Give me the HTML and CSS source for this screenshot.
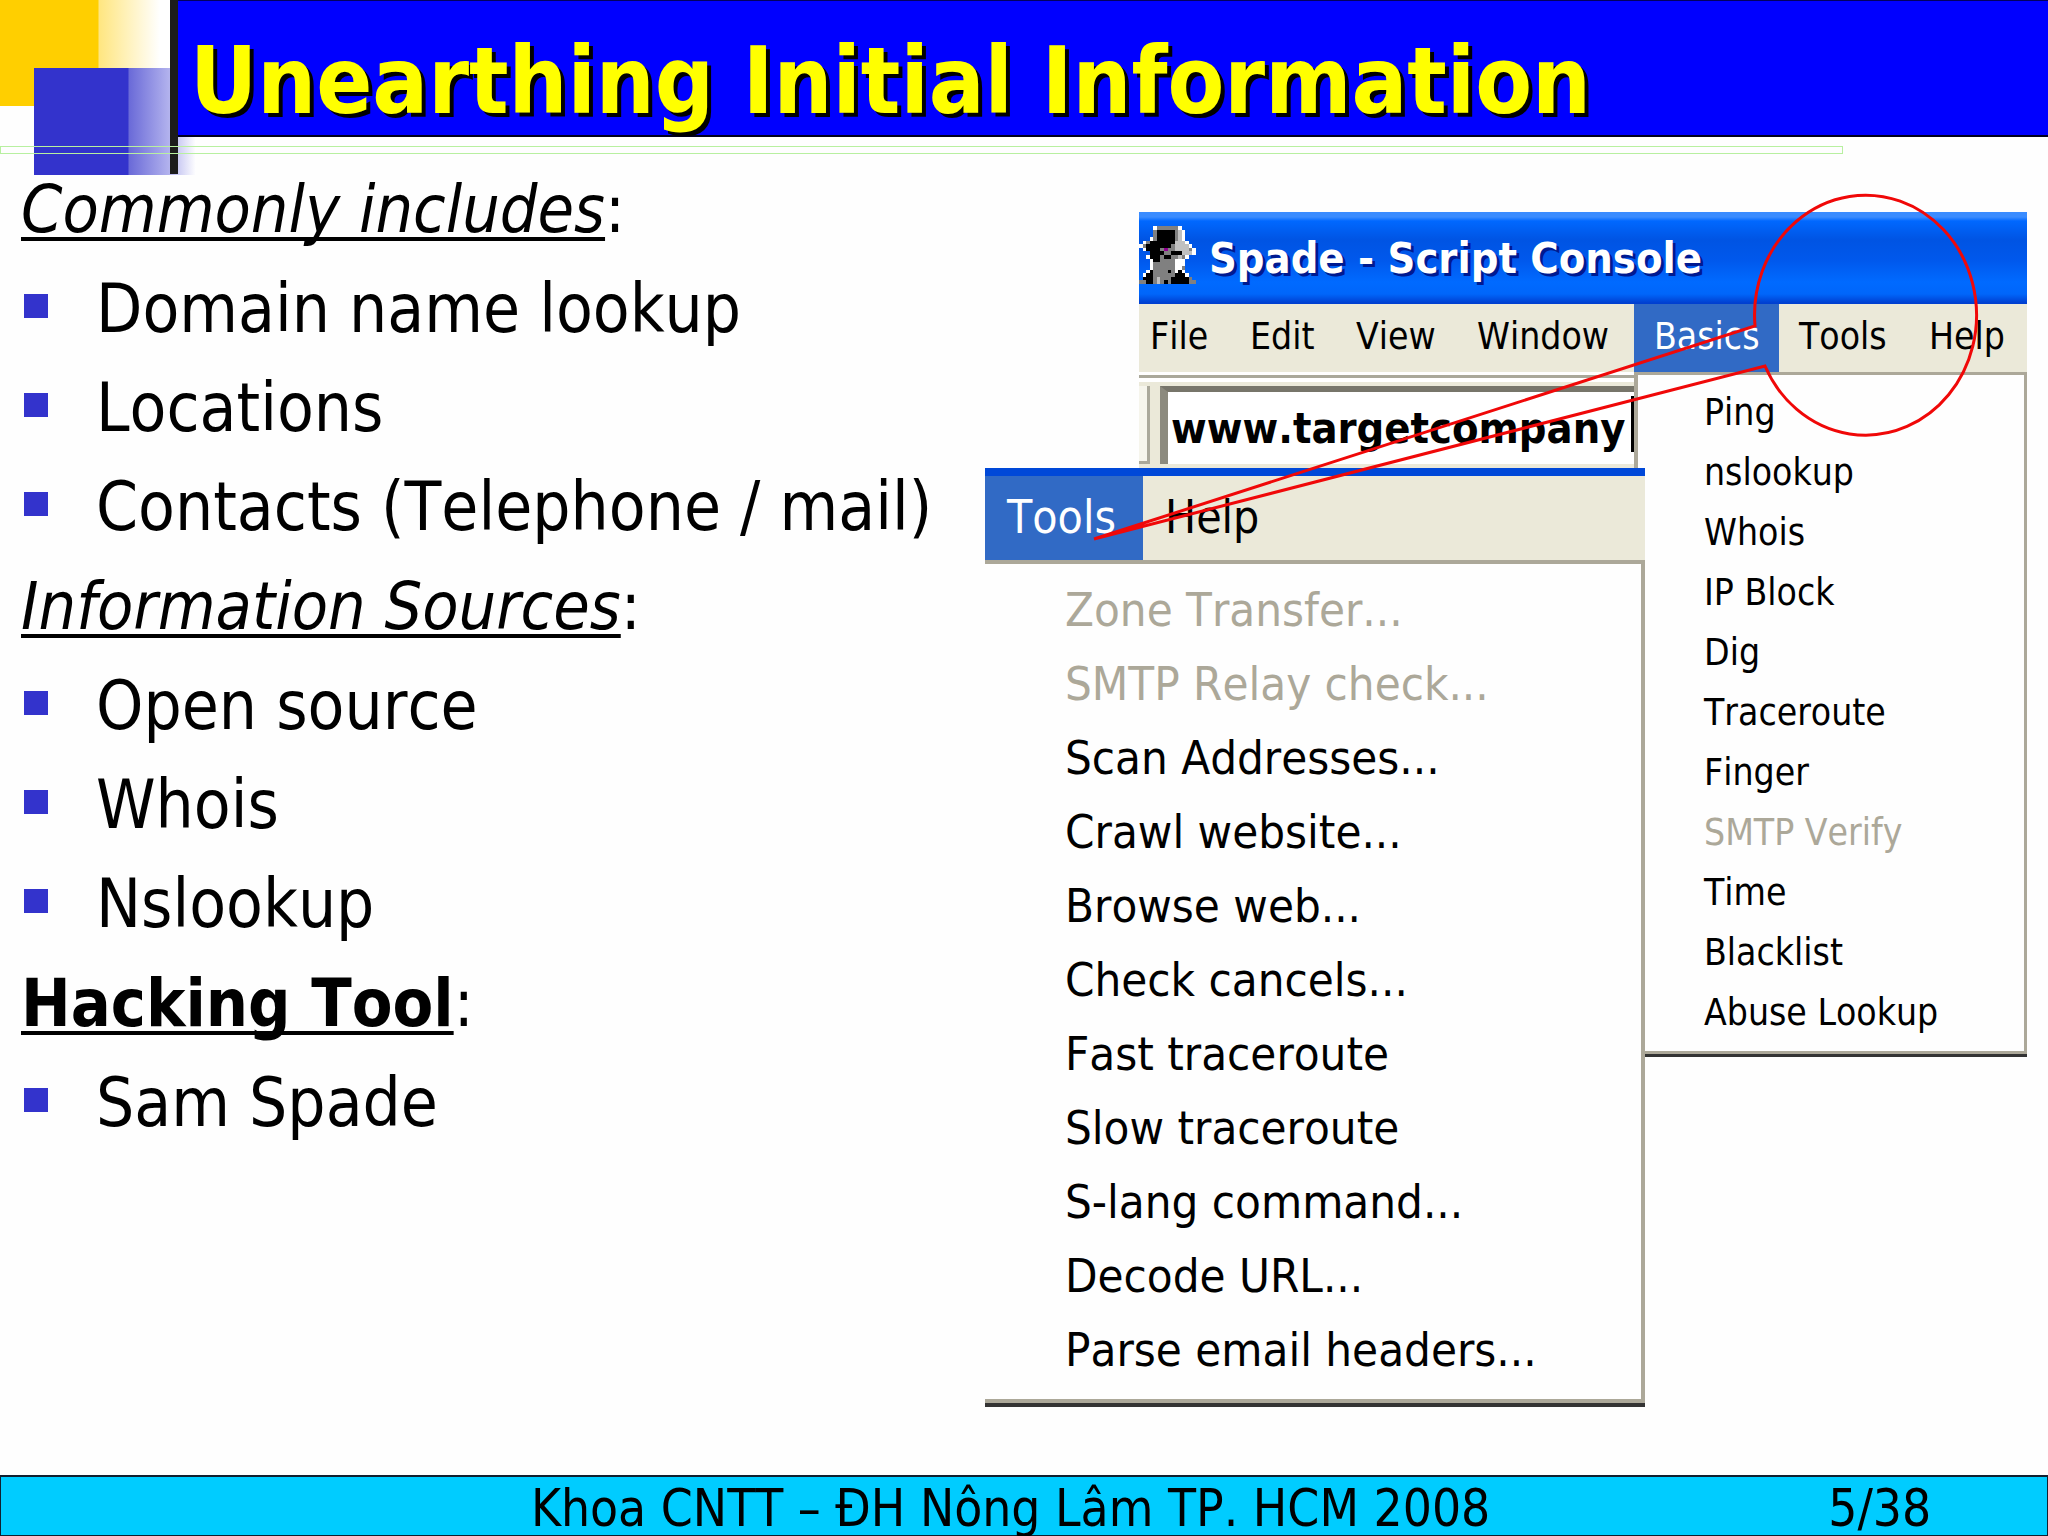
FILE: index.html
```html
<!DOCTYPE html>
<html lang="vi">
<head>
  <meta charset="utf-8">
  <meta name="viewport" content="width=device-width, initial-scale=1">
  <title>Unearthing Initial Information</title>
  <link rel="stylesheet" href="styles.css">
</head>
<body class="slide">
  <header class="slide-header">
    <div class="ornament" aria-hidden="true">
      <span class="ornament-yellow"></span>
      <span class="ornament-blue"></span>
      <span class="ornament-bar"></span>
      <span class="ornament-rule"></span>
    </div>
    <h1 class="slide-title">Unearthing Initial Information</h1>
  </header>

  <main class="slide-body">
    <section class="notes">
      <h2 class="notes-heading"><em>Commonly includes</em>:</h2>
      <ul class="notes-list">
        <li>Domain name lookup</li>
        <li>Locations</li>
        <li>Contacts (Telephone / mail)</li>
      </ul>
      <h2 class="notes-heading"><em>Information Sources</em>:</h2>
      <ul class="notes-list">
        <li>Open source</li>
        <li>Whois</li>
        <li>Nslookup</li>
      </ul>
      <h2 class="notes-heading"><strong>Hacking Tool</strong>:</h2>
      <ul class="notes-list">
        <li>Sam Spade</li>
      </ul>
    </section>

    <section class="figure" aria-label="Spade - Script Console">
      <div class="console">
        <div class="titlebar">
          <svg class="sprite" viewBox="0 0 16 16" preserveAspectRatio="none" shape-rendering="crispEdges" aria-hidden="true">
            <path stroke="#808080" d="M5 .5h6M4 1.5h1M10 1.5h1M4 2.5h1M10 2.5h1M4 3.5h1M10 3.5h1M2 4.5h1M1 5.5h1M9 5.5h1M6 6.5h4M14 6.5h1M7 7.5h2M6 8.5h7M6 9.5h4M4 10.5h6M4 11.5h6M12 11.5h1M4 12.5h6M4 13.5h6M4 14.5h5M14 14.5h1M0 15.5h9M14 15.5h2"/>
            <path stroke="#c0c0c0" d="M11 1.5h1M11 2.5h1M11 3.5h1M10 4.5h3M10 5.5h4M10 6.5h4M12 7.5h3M11 8.5h1M5 14.5h1M5 15.5h1M11 10.5h1"/>
            <path stroke="#fff" d="M4 .5h1M11 .5h1M12 1.5h1M12 2.5h1M3 3.5h1M12 3.5h1M1 4.5h1M13 4.5h1M0 5.5h1M14 5.5h1M1 6.5h1M15 6.5h1M15 7.5h1M2 8.5h1M13 8.5h1M3 9.5h1M10 9.5h3M3 10.5h1M10 10.5h3M3 11.5h1M10 11.5h2M2 12.5h1M10 12.5h1M12 12.5h1M1 13.5h1M13 13.5h1"/>
            <path stroke="#000" d="M5 1.5h5M5 2.5h5M5 3.5h5M3 4.5h7M2 5.5h7M2 6.5h4M3 7.5h4M9 7.5h3M3 8.5h3M7 8.5h2M4 9.5h2M3 12.5h1M8 12.5h1M11 12.5h1M2 13.5h2M10 13.5h3M1 14.5h3M9 14.5h5M2 15.5h2M7 15.5h1M9 15.5h5"/>
            <path stroke="#900090" d="M7 6.5h1"/>
          </svg>
          <span class="titlebar-text">Spade - Script Console</span>
        </div>
        <nav class="menubar" aria-label="Console menu">
          <button type="button">File</button>
          <button type="button">Edit</button>
          <button type="button">View</button>
          <button type="button">Window</button>
          <button type="button" class="wide is-open">Basics</button>
          <button type="button" class="wide">Tools</button>
          <button type="button">Help</button>
        </nav>
      </div>

      <div class="toolbar">
        <span class="toolbar-grip"></span>
        <label class="address">
          <input class="address-input" type="text" value="www.targetcompany" aria-label="Address">
          <span class="address-caret"></span>
        </label>
      </div>

      <div class="menu basics-menu">
        <button type="button">Ping</button>
        <button type="button">nslookup</button>
        <button type="button">Whois</button>
        <button type="button">IP Block</button>
        <button type="button">Dig</button>
        <button type="button">Traceroute</button>
        <button type="button">Finger</button>
        <button type="button" disabled>SMTP Verify</button>
        <button type="button">Time</button>
        <button type="button">Blacklist</button>
        <button type="button">Abuse Lookup</button>
      </div>

      <div class="tools-window">
        <nav class="tools-bar" aria-label="Tools menu">
          <button type="button" class="is-open">Tools</button>
          <button type="button">Help</button>
        </nav>
        <div class="menu tools-menu">
          <button type="button" disabled>Zone Transfer...</button>
          <button type="button" disabled>SMTP Relay check...</button>
          <button type="button">Scan Addresses...</button>
          <button type="button">Crawl website...</button>
          <button type="button">Browse web...</button>
          <button type="button">Check cancels...</button>
          <button type="button">Fast traceroute</button>
          <button type="button">Slow traceroute</button>
          <button type="button">S-lang command...</button>
          <button type="button">Decode URL...</button>
          <button type="button">Parse email headers...</button>
        </div>
      </div>

      <svg class="callout" viewBox="0 0 1042 1195" aria-hidden="true">
        <path d="M770 114A111 120 0 1 1 780 154L109 327Z" fill="none" stroke="#f00808" stroke-width="3"/>
      </svg>
    </section>
  </main>

  <footer class="slide-footer">
    <span class="footer-text">Khoa CNTT – ĐH Nông Lâm TP. HCM 2008</span>
    <span class="footer-page">5/38</span>
  </footer>
</body>
</html>
```
FILE: styles.css
```css
* {
  box-sizing: border-box;
}

.slide {
  display: flex;
  flex-direction: column;
  min-height: 100vh;
  margin: 0;
  background: #fefefe;
  color: #000;
  font-family: "DejaVu Sans Condensed", "DejaVu Sans", Tahoma, sans-serif;
  font-kerning: none;
}

button {
  margin: 0;
  padding: 0;
  border: 0;
  background: none;
  color: inherit;
  font: inherit;
  font-kerning: none;
  text-align: left;
  white-space: nowrap;
}

/* Header */

.slide-header {
  display: grid;
  grid-template-columns: 178px minmax(0, 1fr);
  position: relative;
}

.slide-title {
  margin: 0;
  padding: 28px 12px 0;
  border-top: 1px solid #000060;
  border-bottom: 2px solid #000020;
  background: #00f;
  color: #ff0;
  font-size: 92px;
  line-height: 106px;
  font-weight: 700;
  text-shadow: 4px 4px 0 #000;
  white-space: nowrap;
}

.ornament span {
  position: absolute;
}

.ornament-yellow {
  top: 0;
  left: 0;
  width: 170px;
  height: 106px;
  background: linear-gradient(90deg, #ffcf00 98px, #ffe680 99px, #fff 160px);
  z-index: -2;
}

.ornament-blue {
  top: 68px;
  left: 34px;
  width: 162px;
  height: 107px;
  background: linear-gradient(90deg, #3333cc 94px, #6a6ad8 95px, #b4b4ee 136px, #fff 162px);
  z-index: -1;
}

.ornament-bar {
  top: 0;
  left: 170px;
  width: 8px;
  height: 174px;
  background: #1c1c1c;
}

.ornament-rule {
  top: 146px;
  left: 0;
  width: 90%;
  height: 8px;
  border: 1px solid #b8f0a0;
}

/* Body */

.slide-body {
  display: grid;
  grid-template-columns: minmax(0, 985fr) minmax(0, 1042fr);
  flex: 1;
  padding: 23px 21px 0 0;
}

.notes {
  padding-left: 21px;
  font-size: 67px;
  line-height: 99px;
  white-space: nowrap;
}

.notes-heading {
  margin: 0;
  font-size: 66px;
  font-weight: 400;
  line-height: 100px;
}

.notes-heading em,
.notes-heading strong {
  text-decoration: underline 4px;
  text-underline-offset: 5px;
  text-decoration-skip-ink: none;
}

.notes-list {
  margin: 0;
  padding: 0;
  list-style: none;
}

.notes-list li {
  display: flex;
  align-items: center;
  gap: 48px;
  padding-left: 3px;
}

.notes-list li::before {
  content: "";
  width: 24px;
  height: 24px;
  margin-bottom: 8px;
  background: #3333cc;
}

/* Overlapping console windows */

.figure {
  display: grid;
  grid-template-columns: minmax(0, 154fr) minmax(0, 495fr) minmax(0, 11fr) minmax(0, 382fr);
  grid-template-rows: 160px 96px auto;
  align-items: start;
  align-self: start;
  position: relative;
  margin-top: 52px;
}

.console {
  grid-column: 2 / 5;
  grid-row: 1;
}

.titlebar {
  display: flex;
  align-items: center;
  gap: 13px;
  height: 92px;
  background: linear-gradient(180deg, #3a8cff 0, #3a8cff 5px, #0068ff 9px, #0054e3 28px, #0058ec 48px, #006aff 70px, #0066fa 82px, #003fd0 91px);
}

.sprite {
  width: 57px;
  height: 58px;
  margin-bottom: 6px;
}

.sprite path {
  fill: none;
  stroke-width: 1;
}

.titlebar-text {
  color: #fff;
  font-size: 43px;
  line-height: 50px;
  font-weight: 700;
  text-shadow: 3px 3px 0 #001a90;
  white-space: nowrap;
}

.menubar {
  display: grid;
  grid-template-columns: 100fr 106fr 121fr 168fr 145fr 139fr 109fr;
  height: 68px;
  background: #ebe9d9;
  font-size: 37px;
}

.menubar button {
  min-width: 0;
  padding-left: 11px;
  padding-bottom: 3px;
}

.menubar .wide {
  padding-left: 20px;
}

.menubar .is-open,
.tools-bar .is-open {
  background: #316ac5;
  color: #fff;
}

.toolbar {
  display: flex;
  gap: 10px;
  grid-column: 2;
  grid-row: 2;
  height: 96px;
  padding-top: 14px;
  background: linear-gradient(180deg, #fff 3px, #aaa89a 3px, #aaa89a 6px, #fff 6px, #fff 10px, #ebe9d9 10px);
}

.toolbar-grip {
  width: 11px;
  height: 78px;
  border-right: 3px solid #aaa89a;
  border-bottom: 3px solid #aaa89a;
  background: #f6f5ec;
}

.address {
  display: flex;
  flex: 1;
  align-items: center;
  min-width: 0;
  height: 78px;
  border-top: 6px solid #77756a;
  border-left: 8px solid #8c8a7e;
  background: #fff;
}

.address-input {
  flex: 1;
  min-width: 0;
  padding: 0 0 0 3px;
  border: 0;
  background: none;
  font: 700 43px/50px "DejaVu Sans Condensed", "DejaVu Sans", Tahoma, sans-serif;
  font-kerning: none;
}

.address-caret {
  width: 3px;
  height: 56px;
  margin-bottom: 8px;
  background: #000;
}

.menu {
  display: flex;
  flex-direction: column;
  background: #fefefe;
}

.menu button:disabled {
  color: #aca899;
}

.basics-menu {
  grid-column: 3 / 5;
  grid-row: 2 / 4;
  padding: 8px 0 8px 66px;
  border: 3px solid #aca899;
  border-left-width: 4px;
  box-shadow: 0 3px 0 #333;
  font-size: 37px;
  line-height: 60px;
}

.tools-window {
  grid-column: 1 / 4;
  grid-row: 3;
  border-top: 8px solid #0048d8;
  z-index: 1;
}

.tools-bar {
  display: grid;
  grid-template-columns: 158fr 502fr;
  height: 84px;
  background: #ebe9d9;
  font-size: 46px;
}

.tools-bar button {
  padding-left: 22px;
  padding-bottom: 2px;
}

.tools-menu {
  padding: 9px 0 12px 80px;
  border: 4px solid #aca899;
  border-left: 0;
  box-shadow: 0 4px 0 #333;
  font-size: 47px;
  line-height: 74px;
}

.callout {
  position: absolute;
  top: 0;
  left: 0;
  width: 100%;
  overflow: visible;
  pointer-events: none;
  z-index: 2;
}

/* Footer */

.slide-footer {
  display: grid;
  grid-template-columns: minmax(0, 1829fr) minmax(0, 219fr);
  padding-top: 6px;
  border: 1px solid #102030;
  border-top-width: 2px;
  background: #00ccff;
  font-size: 51px;
  line-height: 52px;
  white-space: nowrap;
}

.footer-text {
  padding-left: 29%;
}
```
